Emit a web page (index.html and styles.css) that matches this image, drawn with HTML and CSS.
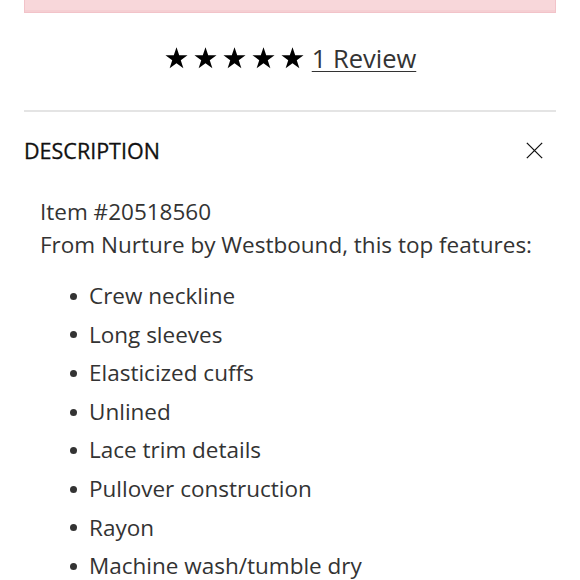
FILE: index.html
```html
<!DOCTYPE html>
<html>
<head>
<meta charset="utf-8">
<link rel="stylesheet" href="styles.css">
</head>
<body>
<div class="page">
  <div class="alert"></div>
  <div class="rating">
    <div class="stars">
      <svg class="star" viewBox="0 0 24 24"><path d="M12 1.2l2.6 7.6h8l-6.5 4.8 2.5 7.7L12 16.5l-6.6 4.8 2.5-7.7L1.4 8.8h8z"/></svg>
      <svg class="star" viewBox="0 0 24 24"><path d="M12 1.2l2.6 7.6h8l-6.5 4.8 2.5 7.7L12 16.5l-6.6 4.8 2.5-7.7L1.4 8.8h8z"/></svg>
      <svg class="star" viewBox="0 0 24 24"><path d="M12 1.2l2.6 7.6h8l-6.5 4.8 2.5 7.7L12 16.5l-6.6 4.8 2.5-7.7L1.4 8.8h8z"/></svg>
      <svg class="star" viewBox="0 0 24 24"><path d="M12 1.2l2.6 7.6h8l-6.5 4.8 2.5 7.7L12 16.5l-6.6 4.8 2.5-7.7L1.4 8.8h8z"/></svg>
      <svg class="star" viewBox="0 0 24 24"><path d="M12 1.2l2.6 7.6h8l-6.5 4.8 2.5 7.7L12 16.5l-6.6 4.8 2.5-7.7L1.4 8.8h8z"/></svg>
    </div>
    <a class="reviews" href="#">1 Review</a>
  </div>
  <div class="divider"></div>
  <div class="desc-head">
    <span class="desc-title">DESCRIPTION</span>
    <svg class="close" viewBox="0 0 20 20"><path d="M1 1L19 19M19 1L1 19" stroke="#111" stroke-width="1.5" fill="none"/></svg>
  </div>
  <div class="desc-body">
    <p class="line">Item #20518560</p>
    <p class="line">From Nurture by Westbound, this top features:</p>
    <ul class="features">
      <li>Crew neckline</li>
      <li>Long sleeves</li>
      <li>Elasticized cuffs</li>
      <li>Unlined</li>
      <li>Lace trim details</li>
      <li>Pullover construction</li>
      <li>Rayon</li>
      <li>Machine wash/tumble dry</li>
    </ul>
  </div>
</div>
</body>
</html>
```
FILE: styles.css
```css
html, body {
  margin: 0;
  padding: 0;
  background: #fff;
}
body {
  font-family: "Open Sans", "Liberation Sans", sans-serif;
  color: #333;
  overflow: hidden;
}
.page {
  padding: 0 24px;
}
.alert {
  height: 12px;
  background: #f8d7da;
  border: 1px solid #f2c3c9;
  border-top: none;
  box-shadow: inset 0 -2px 0 #f5cfd3;
}
.rating {
  height: 40px;
  margin-top: 25px;
  display: flex;
  justify-content: center;
  align-items: center;
  gap: 7px;
}
.stars {
  display: flex;
  gap: 4px;
}
.star {
  width: 25px;
  height: 25px;
  fill: #000;
}
.reviews {
  font-size: 25.5px;
  color: #333;
  text-decoration: underline;
  text-underline-offset: 3px;
  text-decoration-thickness: 1px;
  line-height: 40px;
}
.divider {
  margin-top: 32px;
  border-top: 2px solid #e4e4e4;
}
.desc-head {
  height: 76px;
  display: flex;
  justify-content: space-between;
  align-items: center;
}
.desc-title {
  font-size: 21.5px;
  color: #111;
  -webkit-text-stroke: 0.3px #111;
}
.close {
  width: 17px;
  height: 17px;
  margin-right: 13px;
}
.desc-body {
  padding-left: 16px;
  padding-top: 7px;
}
.line {
  margin: 0;
  font-size: 22.5px;
  line-height: 33px;
}
.features {
  list-style: none;
  margin: 16px 0 0;
  padding: 0;
}
.features li {
  display: flex;
  align-items: center;
  font-size: 22.5px;
  line-height: 38.6px;
}
.features li::before {
  content: "";
  width: 7px;
  height: 7px;
  border-radius: 50%;
  background: #333;
  margin-left: 30px;
  margin-right: 12px;
  flex: none;
}
```
